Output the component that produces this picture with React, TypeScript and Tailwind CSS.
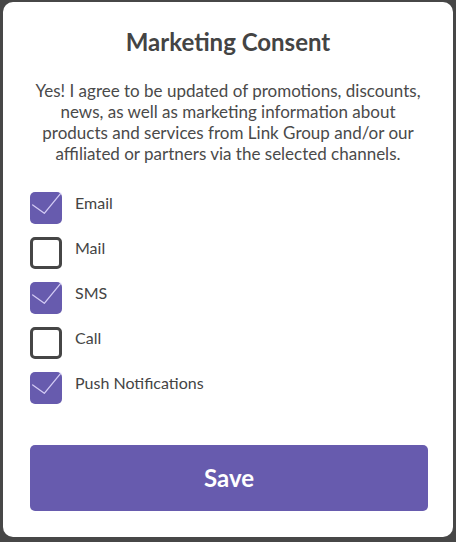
import React, { useState } from "react";

const channels = [
  { label: "Email", checked: true },
  { label: "Mail", checked: false },
  { label: "SMS", checked: true },
  { label: "Call", checked: false },
  { label: "Push Notifications", checked: true },
];

function Box({ checked }: { checked: boolean }) {
  if (checked) {
    return (
      <div className="relative w-[32px] h-[32px] shrink-0 rounded-[5px] bg-[#675bae]">
        <svg className="absolute inset-0" width="32" height="32" viewBox="0 0 32 32" fill="none">
          <path d="M2.7 13 L14.3 21.3 L30.7 1.3" stroke="#d4ccf5" strokeWidth="1.3" strokeLinecap="round" strokeLinejoin="round" />
        </svg>
      </div>
    );
  }
  return <div className="w-[32px] h-[32px] shrink-0 rounded-[5px] border-[3px] border-[#464646] bg-white" />;
}

export default function App() {
  const [items, setItems] = useState(channels);
  return (
    <div className="w-[456px] h-[542px] bg-[#474747] pt-[2px] pl-[3px]" style={{ fontFamily: "Lato, 'Noto Sans', sans-serif" }}>
      <div className="w-[450px] h-[535px] bg-white rounded-[10px] pt-[24px] px-[27px] flex flex-col">
        <h1 className="text-center text-[24px] leading-[32px] font-bold text-[#444444]">Marketing Consent</h1>
        <p className="mt-[22px] text-center text-[17px] leading-[21px] text-[#4a4a4a]">
          Yes! I agree to be updated of promotions, discounts, news, as well as marketing information about products and services from Link Group and/or our affiliated or partners via the selected channels.
        </p>
        <div className="mt-[28px] flex flex-col gap-[13px]">
          {items.map((it, i) => (
            <label
              key={it.label}
              className="flex items-start gap-[13px] cursor-pointer"
              onClick={() => setItems(items.map((x, j) => (j === i ? { ...x, checked: !x.checked } : x)))}
            >
              <Box checked={it.checked} />
              <span className="pt-[1px] text-[16px] leading-[20px] text-[#444444]">{it.label}</span>
            </label>
          ))}
        </div>
        <button className="mt-[41px] w-[398px] h-[66px] rounded-[5px] bg-[#675bae] text-white text-[24px] font-bold">
          Save
        </button>
      </div>
    </div>
  );
}
